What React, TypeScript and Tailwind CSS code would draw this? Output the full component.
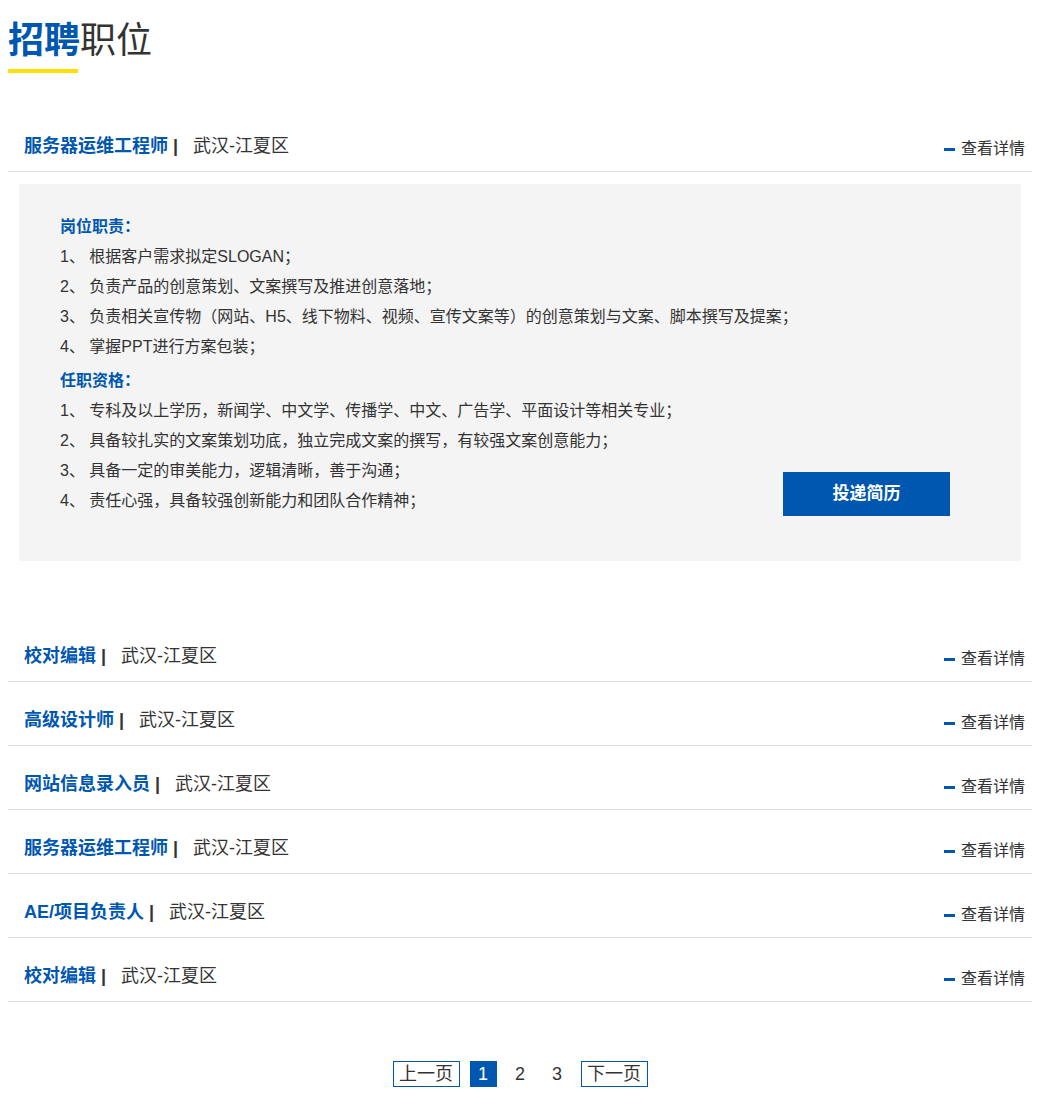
import React from "react";

const BLUE = "text-[#0057b0]";

type Job = { title: string; place: string };

const jobs: Job[] = [
  { title: "校对编辑", place: "武汉-江夏区" },
  { title: "高级设计师", place: "武汉-江夏区" },
  { title: "网站信息录入员", place: "武汉-江夏区" },
  { title: "服务器运维工程师", place: "武汉-江夏区" },
  { title: "AE/项目负责人", place: "武汉-江夏区" },
  { title: "校对编辑", place: "武汉-江夏区" },
];

function Row({ job }: { job: Job }) {
  return (
    <div className="flex h-[64px] items-start justify-between border-b border-[#dddddd] pl-4 pr-[7px] pt-[25px]">
      <div className="flex items-center text-[18px] leading-[26px]">
        <span className={`font-bold ${BLUE}`}>{job.title}</span>
        <span className="ml-[5px] font-bold text-[#333]">|</span>
        <span className="ml-[15px] text-[#333]">{job.place}</span>
      </div>
      <div className="mt-[3px] flex items-center text-[16px] leading-[26px] text-[#333]">
        <span className="mr-[6px] inline-block h-[3px] w-[11px] bg-[#0057b0]" />
        <span>查看详情</span>
      </div>
    </div>
  );
}

const duties = [
  "1、 根据客户需求拟定SLOGAN；",
  "2、 负责产品的创意策划、文案撰写及推进创意落地；",
  "3、 负责相关宣传物（网站、H5、线下物料、视频、宣传文案等）的创意策划与文案、脚本撰写及提案；",
  "4、 掌握PPT进行方案包装；",
];

const reqs = [
  "1、 专科及以上学历，新闻学、中文学、传播学、中文、广告学、平面设计等相关专业；",
  "2、 具备较扎实的文案策划功底，独立完成文案的撰写，有较强文案创意能力；",
  "3、 具备一定的审美能力，逻辑清晰，善于沟通；",
  "4、 责任心强，具备较强创新能力和团队合作精神；",
];

export default function App() {
  return (
    <div
      className="min-h-[1108px] w-[1040px] bg-white px-2 pt-[22px] pb-[20px]"
      style={{ fontFamily: '"Liberation Sans", "Noto Sans CJK SC", sans-serif' }}
    >
      <h1 className="text-[36px] leading-[38px] text-[#333]">
        <span className={`font-bold ${BLUE}`}>招聘</span>
        <span>职位</span>
      </h1>
      <div className="mt-[9px] h-[4px] w-[70px] bg-[#ffe000]" />

      <div className="mt-[35px]">
        <Row job={{ title: "服务器运维工程师", place: "武汉-江夏区" }} />
        <div className="mx-[11px] mt-[12px] flex items-end justify-between bg-[#f4f4f4] pl-[41px] pr-[71px] pt-[28px] pb-[45px]">
          <div className="min-w-0 flex-1 whitespace-nowrap text-[16px] leading-[30px] text-[#333]">
            <div className={`font-bold ${BLUE}`}>岗位职责：</div>
            {duties.map((d) => (
              <div key={d}>{d}</div>
            ))}
            <div className={`mt-[4px] font-bold ${BLUE}`}>任职资格：</div>
            {reqs.map((d) => (
              <div key={d}>{d}</div>
            ))}
          </div>
          <button className="flex h-[44px] w-[167px] shrink-0 items-center justify-center bg-[#0057b0] text-[17px] font-bold text-white">
            投递简历
          </button>
        </div>
      </div>

      <div className="mt-[57px]">
        {jobs.map((j, i) => (
          <Row key={i} job={j} />
        ))}
      </div>

      <div className="mt-[59px] flex items-center justify-center gap-[10px] text-[18px] leading-[24px] text-[#333]">
        <span className="flex h-[26px] w-[67px] items-center justify-center border border-[#0057b0]">上一页</span>
        <span className="flex h-[26px] w-[27px] items-center justify-center bg-[#0057b0] text-white">1</span>
        <span className="flex h-[26px] w-[27px] items-center justify-center">2</span>
        <span className="flex h-[26px] w-[27px] items-center justify-center">3</span>
        <span className="flex h-[26px] w-[67px] items-center justify-center border border-[#0057b0]">下一页</span>
      </div>
    </div>
  );
}
